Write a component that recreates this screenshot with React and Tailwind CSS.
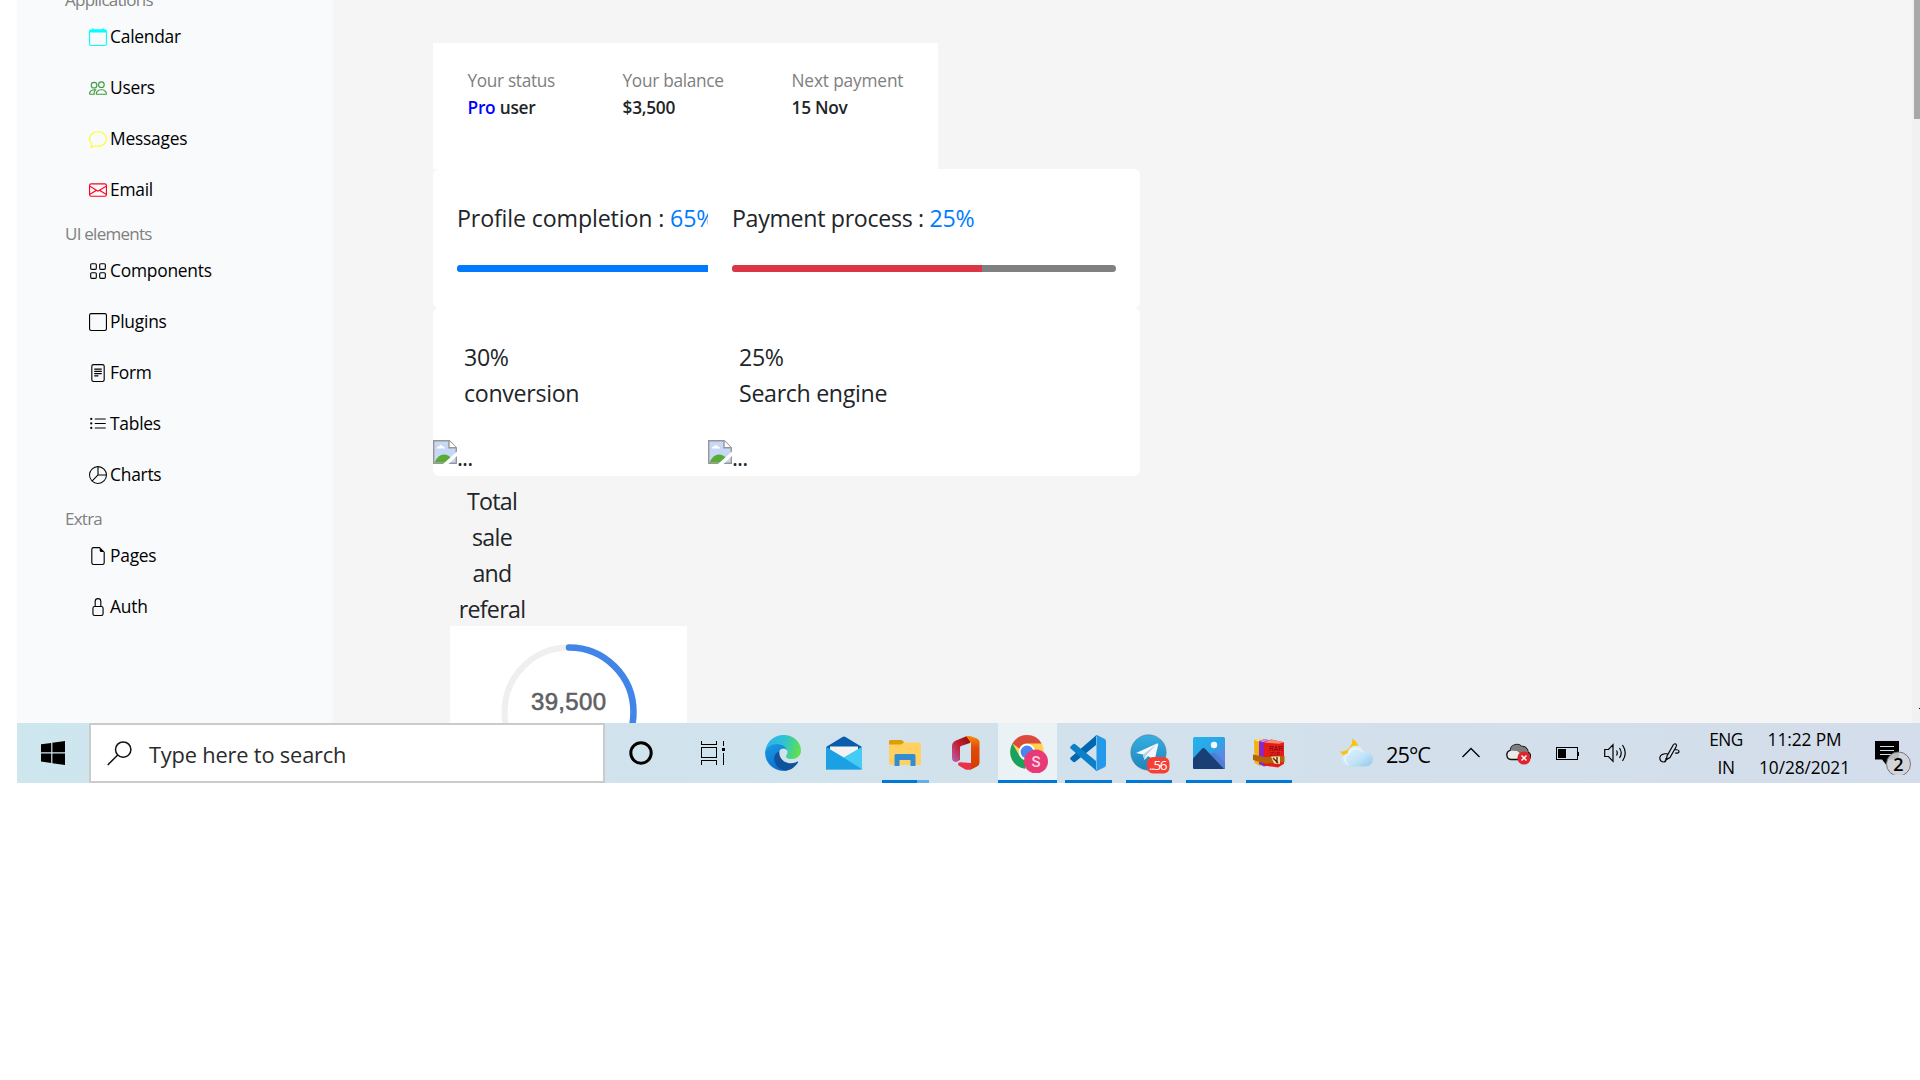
import React from "react";
import {
  BsCalendar, BsPeople, BsChat, BsEnvelope, BsGrid, BsSquare,
  BsFileText, BsListUl, BsPieChart, BsFileEarmark, BsLock,
} from "react-icons/bs";

const NAV = [
  {
    title: "Applications",
    items: [
      [BsCalendar, "Calendar", "text-[#00ffff]"],
      [BsPeople, "Users", "text-[#3d9a3d]"],
      [BsChat, "Messages", "text-[#ffff1a]"],
      [BsEnvelope, "Email", "text-[#ff0018]"],
    ],
  },
  {
    title: "UI elements",
    items: [
      [BsGrid, "Components", "text-black"],
      [BsSquare, "Plugins", "text-black"],
      [BsFileText, "Form", "text-black"],
      [BsListUl, "Tables", "text-black"],
      [BsPieChart, "Charts", "text-black"],
    ],
  },
  {
    title: "Extra",
    items: [
      [BsFileEarmark, "Pages", "text-black"],
      [BsLock, "Auth", "text-black"],
    ],
  },
];

function Sidebar() {
  return (
    <aside className="w-[316px] shrink-0 overflow-hidden bg-[#f8fafc]">
      <div className="-mt-[19px] text-[17.4px] tracking-[-0.014em]">
        {NAV.map((g) => (
          <section key={g.title}>
            <h6 className="flex h-[30px] items-end pl-12 text-[17px] leading-[23px] tracking-[-0.044em] text-[#808080]">{g.title}</h6>
            {g.items.map(([Icon, label, color]) => (
              <div key={label} className="flex h-[51px] items-center gap-[3px] pl-[72px]">
                <Icon className={"size-[18px] " + color} />
                <span className="text-black">{label}</span>
              </div>
            ))}
          </section>
        ))}
      </div>
    </aside>
  );
}

function BrokenImage() {
  return (
    <div className="flex h-9 items-start">
      <svg width="24" height="24" viewBox="0 0 24 24">
        <path d="M.7.7h15.600l7 7v15.600H.7z" fill="#c6d8f6" stroke="#979797" strokeWidth="1.400" />
        <path d="M16 .7v7h7.300" fill="#fff" stroke="#979797" strokeWidth="1.400" />
        <path d="M3.500 8.500q.5-2.500 2.500-2 1.500-3 4 0 2 .2 2 2z" fill="#fff" />
        <path d="M1.500 22.600q3.500-8 9.500-8 4.500 0 7 3.500l-5 4.500z" fill="#5aaa37" />
        <path d="M24 11.500v4.500l-8.500 8H10z" fill="#fff" />
      </svg>
      <span className="text-[23px] leading-[35px] tracking-[-0.04em]">...</span>
    </div>
  );
}

function Progress({ title, value, spacing, fill }) {
  return (
    <div className="w-[432px] shrink-0 pt-[31px] pl-6">
      <p className={"whitespace-nowrap text-[23.2px] leading-[37px] " + spacing}>
        {title} : <span className="text-[#007bff]">{value}</span>
      </p>
      <div className="mt-[28px] flex h-[7px] w-[384px] overflow-hidden rounded-full bg-[#808080]">
        <div className={"h-full " + fill} />
      </div>
    </div>
  );
}

function Stat({ value, label }) {
  return (
    <div>
      <div className="h-[132px] pt-[31px] pl-[31px] text-[23.2px] leading-[36px] tracking-[-0.014em]">
        <p>{value}</p>
        <p>{label}</p>
      </div>
      <BrokenImage />
    </div>
  );
}

function Status({ label, spacing, children }) {
  return (
    <div>
      <p className={"font-normal text-[#808080] " + spacing}>{label}</p>
      <p className="font-semibold tracking-[-0.014em]">{children}</p>
    </div>
  );
}

function Dashboard() {
  return (
    <main className="flex-1 overflow-hidden pt-[43px] pl-[100px] text-[#212529]">
      <section className="flex h-[126px] w-[505px] bg-white pt-[24px] pl-[34.5px] text-[17.3px] leading-[27px]">
        <div className="w-[155px]"><Status label="Your status" spacing="tracking-[-0.02em]"><span className="text-[#0000ff]">Pro</span> user</Status></div>
        <div className="w-[169px]"><Status label="Your balance" spacing="tracking-[-0.018em]">$3,500</Status></div>
        <div className="whitespace-nowrap"><Status label="Next payment" spacing="tracking-[-0.009em]">15 Nov</Status></div>
      </section>
      <section className="flex h-[139px] w-[707px] overflow-hidden rounded-md bg-white">
        <div className="w-[275px] overflow-hidden">
          <Progress title="Profile completion" value="65%" spacing="tracking-[-0.006em]" fill="w-[251px] bg-[#007bff]" />
        </div>
        <Progress title="Payment process" value="25%" spacing="tracking-[-0.014em]" fill="w-[250px] bg-[#dc3545]" />
      </section>
      <section className="grid h-[168px] w-[707px] grid-cols-[275px_432px] rounded-md bg-white">
        <Stat value="30%" label="conversion" />
        <Stat value="25%" label="Search engine" />
      </section>
      <section className="pl-[17px]">
        <div className="h-[150px] w-[84px] pt-[7px] text-center text-[23.2px] leading-[36px] tracking-[-0.03em]">
          <p>Total</p><p>sale</p><p>and</p><p>referal</p>
        </div>
        <div className="h-[140px] w-[237px] bg-white">
          <svg width="237" height="140" viewBox="0 0 237 140" fill="none">
            <circle cx="119" cy="86" r="64.500" stroke="#efefef" strokeWidth="6" />
            <path d="M119 21.500a64.500 64.500 0 0 1 0 129" stroke="#4285e8" strokeWidth="6.500" strokeLinecap="round" />
            <text x="81" y="83.500" textLength="75" fontSize="24" fontFamily="Liberation Sans, sans-serif" fill="#5f6164" stroke="#5f6164" strokeWidth=".6">39,500</text>
          </svg>
        </div>
      </section>
    </main>
  );
}

const EdgeIcon = () => (
  <svg width="36" height="36" viewBox="0 0 36 36">
    <defs>
      <linearGradient id="eg1" x1="0" y1="0.300" x2="1" y2="0.500"><stop stopColor="#2fb0ee" /><stop offset=".5" stopColor="#2cc3d2" /><stop offset="1" stopColor="#62e04c" /></linearGradient>
      <linearGradient id="eg2" x1="0" y1="0" x2="0.400" y2="1"><stop stopColor="#1b9de2" /><stop offset="1" stopColor="#0a6fd4" /></linearGradient>
    </defs>
    <path d="M0 17C1 7 9 0 18.500 0 29 0 36 7.500 36 15.500c0 5.500-4.300 8.500-9 8.500-4 0-6-1.300-6-2.600 0-1 1.500-1.600 1.500-4.400 0-4-4-7.500-9.500-7.500C6 9.500 1.500 13 0 17z" fill="url(#eg1)" />
    <path d="M0 17C1.500 12 6.500 9 12 9c6 0 10.500 3.600 10.500 8 0-2-2-3.500-4.200-3.500-3 0-5.300 3.500-5.300 8C13 29 18 35 23 35.200 13 38 0 31 0 17z" fill="url(#eg2)" />
    <path d="M14.500 16C10 18 8.500 22 9.500 26c1.500 6 7 10 12.500 9.500 4.500-.8 8.500-4 11-8 .4-.9-.3-1.200-1-.8C22 31.500 13 24.500 14.500 16z" fill="#10529c" />
  </svg>
);

const MailIcon = () => (
  <svg width="36" height="36" viewBox="0 0 36 36">
    <path d="M0 12 16.500 2q1.500-1 3 0L36 12l-18 12z" fill="#0b5cad" />
    <path d="M4 11.500h28V24H4z" fill="#f3f3f3" />
    <path d="M0 12l18 10.500L36 12v22.500H0z" fill="#2fb5ec" />
    <path d="M18 22.500 36 12v22z" fill="#45ccf5" />
    <path d="M0 12l36 22.500H0z" fill="#159be0" opacity=".75" />
  </svg>
);

const FolderIcon = () => (
  <svg width="32" height="36" viewBox="0 0 32 36">
    <path d="M0 6.500Q0 5 1.500 5h11l2.500 2v4H0z" fill="#dd9d05" />
    <path d="M0 9.500h12L15 7.500h15.500Q32 7.500 32 9v19.500q0 1.500-1.500 1.500h-29Q0 30 0 28.500z" fill="#fed161" />
    <path d="M5.500 31V20.500Q5.500 19 7 19h18q1.500 0 1.500 1.500V31h-5v-6h-11v6z" fill="#338dd3" />
  </svg>
);

const OfficeIcon = () => (
  <svg width="28" height="36" viewBox="0 0 28 36">
    <defs>
      <linearGradient id="of1" x1="1" y1="0" x2="0" y2="1"><stop stopColor="#8f0b0b" /><stop offset=".5" stopColor="#c22033" /><stop offset="1" stopColor="#ba63b7" /></linearGradient>
      <linearGradient id="of2" x1="0" y1="0" x2="0" y2="1"><stop stopColor="#f78b0b" /><stop offset=".35" stopColor="#e04b08" /><stop offset="1" stopColor="#d63b02" /></linearGradient>
    </defs>
    <path d="M15 1 4 5.500Q0 7 0 11v12q0 4 4.500 4L8 25V12.500q0-1 1-1.500l9-3V1z" fill="url(#of1)" />
    <path d="M14 1h4l7 2.500Q27.500 4.500 27.500 7v21q0 2.500-2.500 3.500L18 35h-1l2-3V8z" fill="url(#of2)" />
    <path d="M6 29q0-1.500 2-1.700l11 .7v4q-1 4-6 2.300L7.500 31Q6 30.300 6 29z" fill="#ec2f4b" />
  </svg>
);

const ChromeIcon = () => (
  <svg width="40" height="40" viewBox="0 0 40 40">
    <circle cx="19" cy="19" r="16.800" fill="#fdd24e" />
    <path d="M4.400 10.600A16.800 16.800 0 0 1 33.600 10.600H19a8.400 8.400 0 0 0-7.600 5z" fill="#da4a3d" />
    <path d="M4.400 10.600l7.300 12.600A8.400 8.400 0 0 0 19 27.400l-2 8.300A16.800 16.800 0 0 1 4.400 10.600z" fill="#19a15f" />
    <circle cx="19" cy="19" r="8.200" fill="#fff" />
    <circle cx="19" cy="19" r="6.400" fill="#4a86f0" />
    <circle cx="28" cy="28.500" r="12" fill="#e93a78" />
    <text x="28" y="34" textAnchor="middle" fontSize="15" fontFamily="Roboto, sans-serif" fontWeight="500" fill="#fbd5e2">S</text>
  </svg>
);

const CodeIcon = () => (
  <svg width="36" height="36" viewBox="0 0 36 36">
    <path d="M26 .5v9.500L5 27q-1 .6-2-.2L.6 24.600q-.9-1 0-2z" fill="#0067b0" />
    <path d="M26 35.500V26L5 9Q4 8.400 3 9.200L.6 11.400q-.9 1 0 2z" fill="#0a80c8" />
    <path d="M25.500.3q.8-.5 1.800 0L34.500 3.800q1.500.8 1.500 2.500v23.400q0 1.700-1.500 2.500l-7.200 3.500q-1 .5-2 0 1.200-.2 1.200-2V2.300q0-1.600-1-2z" fill="#2499ea" />
  </svg>
);

const TelegramIcon = () => (
  <svg width="42" height="42" viewBox="0 0 42 42">
    <defs><linearGradient id="tg" x1="0" y1="0" x2="0" y2="1"><stop stopColor="#37aee2" /><stop offset="1" stopColor="#1c86bb" /></linearGradient></defs>
    <circle cx="20.500" cy="20.500" r="17.700" fill="url(#tg)" stroke="#567f96" strokeWidth=".6" />
    <path d="M8 21 29 11.500q1.500-.5 1.200 1L26.500 28.500 20 23.900 16.500 28 15 22.500z" fill="#f4f9fc" />
    <path d="M15 22.500 28.500 12.500 18 23.500 16.500 28z" fill="#b9d3e3" />
    <rect x="19" y="25" width="22.500" height="16.500" rx="6" fill="#f73f34" />
    <text x="21" y="38" textLength="18.500" fontSize="13.500" fontFamily="Open Sans, sans-serif" fill="#fff">..56</text>
  </svg>
);

const PhotosIcon = () => (
  <svg width="32" height="32" viewBox="0 0 32 32">
    <defs><linearGradient id="ph" x1="0" y1="0" x2="1" y2="1"><stop stopColor="#26b2ee" /><stop offset=".5" stopColor="#2ba5e5" /><stop offset="1" stopColor="#8d6be0" /></linearGradient></defs>
    <rect width="32" height="32" rx="1.500" fill="url(#ph)" />
    <path d="M18 17.500q2-3.500 4-1.500L32 25.500V32H14z" fill="#4f7fd4" />
    <path d="M0 21.500 9 11.800q1.500-1.500 3 0L31 32H1.500Q0 32 0 30.500z" fill="#1a3e76" />
    <circle cx="21" cy="8" r="3.200" fill="#f3f8fb" />
  </svg>
);

const RarIcon = () => (
  <svg width="32" height="30" viewBox="0 0 32 30">
    <path d="M1 2l6-1.500 4 1v24L7 28l-5.500-3z" fill="#f0b40c" />
    <path d="M1 2l6-1.500 4 1-6 2z" fill="#fbe27b" />
    <path d="M6 3l6-2 5 1.500v24L11 28.500 6 26z" fill="#8b28c7" />
    <path d="M6 3l6-2 4 1.200-6 2z" fill="#c98be8" />
    <path d="M11 4.500 18 1.500l13 2.700v21.500L25 29.500l-14-2z" fill="#e51d1a" />
    <path d="M11 4.500 18 1.500l13 2.700-5 1.500z" fill="#f58c72" />
    <text x="16" y="12.500" fontSize="6.500" textLength="14" fontFamily="Liberation Sans, sans-serif" fill="#6d0707">RAR</text>
    <text x="17" y="18" fontSize="5.500" textLength="10" fontFamily="Liberation Sans, sans-serif" fill="#8d0d0d">ZIP</text>
    <path d="M0 16.500 12 19l19.500-1v6L12 25.500 0 22z" fill="#b5620c" />
    <path d="M18 18.500h9v7.500l-6-.5z" fill="#f4dfa9" />
    <path d="M20 20l5 5M24 19v6" stroke="#46250b" strokeWidth="1.300" />
  </svg>
);

const WeatherIcon = () => (
  <svg width="34" height="30" viewBox="0 0 34 30">
    <defs><linearGradient id="cl" x1="0" y1="0" x2="1" y2="1"><stop stopColor="#e9f6fd" /><stop offset=".6" stopColor="#c2e3f6" /><stop offset="1" stopColor="#8ec8ec" /></linearGradient></defs>
    <path d="M12 .5q6 3 6 9T11 19q-7 1-11-5.500 6 .5 9.500-4t2.500-9z" fill="#fcc20c" />
    <path d="M9 28.500a6.500 6.500 0 0 1-1.500-13 8.500 8.500 0 0 1 16.500-2q8.500.5 9 7.500-.5 7-8 7.500z" fill="url(#cl)" />
    <path d="M9 27a5.500 5.500 0 0 1-.5-10.500A8 8 0 0 1 23 14.500" stroke="#fff" strokeWidth="1" fill="none" opacity=".8" />
  </svg>
);

function TaskButton({ w, ml, active, split, children }) {
  return (
    <div className={"flex h-[60px] flex-col " + w + " " + ml + (active ? " bg-[#eaf2f6]" : "")}>
      <div className="flex h-[57px] items-center justify-center pt-[3px]">{children}</div>
      <div className="flex h-[3px]">
        <div className="flex-1 bg-[#0078d7]" />
        {split && <div className="w-3 bg-[#66aee6]" />}
      </div>
    </div>
  );
}

function Taskbar() {
  return (
    <footer className="ml-[17px] flex h-[60px] items-center overflow-hidden bg-gradient-to-r from-[#cee6ee] via-[#d2e1eb] via-60% to-[#d4ddeb] text-black">
      <div className="flex w-[72px] shrink-0 justify-center">
        <svg width="24" height="24" viewBox="0 0 24 24"><path d="M0 3.300 10.200 2v9.300H0zM11.400 1.700 24 0v11.300H11.400zM0 12.500h10.200V22L0 20.600zM11.400 12.500H24V24l-12.600-1.700z" /></svg>
      </div>
      <div className="flex h-[60px] w-[516px] shrink-0 items-center border-2 border-[#cbcbcb] bg-white pl-4 text-[#2b2b2b]">
        <svg width="25" height="25" viewBox="0 0 25 25" fill="none" stroke="#111" strokeWidth="1.500"><circle cx="16.200" cy="8.600" r="7.700" /><path d="M10.700 14 .7 24" /></svg>
        <span className="pt-[5px] pl-[17px] text-[21.800px] tracking-[-0.008em]">Type here to search</span>
      </div>
      <svg className="ml-6 shrink-0" width="24" height="24" viewBox="0 0 24 24"><circle cx="12" cy="12" r="10.200" fill="none" stroke="#000" strokeWidth="3" /></svg>
      <svg className="ml-[48px] shrink-0" width="24" height="24" viewBox="0 0 24 24" fill="none" stroke="#000" strokeWidth="1" shapeRendering="crispEdges">
        <path d="M.5 0v3.500h15V0M.5 23.500v-4h15v4M.5 6.500h15v10H.5zM22.500 0v5M22.500 11.500v12" /><path d="M21 7h3v3h-3z" fill="#000" stroke="none" />
      </svg>
      <div className="ml-[40px] shrink-0"><EdgeIcon /></div>
      <div className="ml-[25px] shrink-0"><MailIcon /></div>
      <TaskButton w="w-[47px] shrink-0" ml="ml-[20px]" split><div className="mr-px"><FolderIcon /></div></TaskButton>
      <div className="ml-[22.500px] mr-[0.500px] shrink-0"><OfficeIcon /></div>
      <TaskButton w="w-[59px] shrink-0" ml="ml-[18px]" active><ChromeIcon /></TaskButton>
      <TaskButton w="w-[47px] shrink-0" ml="ml-[8px]"><div className="mr-px"><CodeIcon /></div></TaskButton>
      <TaskButton w="w-[46px] shrink-0" ml="ml-[14px]"><TelegramIcon /></TaskButton>
      <TaskButton w="w-[46px] shrink-0" ml="ml-[14px]"><PhotosIcon /></TaskButton>
      <TaskButton w="w-[46px] shrink-0" ml="ml-[14px]"><RarIcon /></TaskButton>
      <div className="ml-[48px] shrink-0"><WeatherIcon /></div>
      <span className="ml-[12px] w-[76px] shrink-0 pt-[5px] text-[21.800px] tracking-[-0.045em]">25°C</span>
      <svg className="shrink-0" width="18" height="12" viewBox="0 0 18 12" fill="none" stroke="#000" strokeWidth="1.300"><path d="M.5 10 9 1.500 17.500 10" /></svg>
      <svg className="ml-[26px] shrink-0" width="25" height="24" viewBox="0 0 25 24">
        <path d="M5 18.500a4.700 4.700 0 0 1-.7-9.200A6.500 6.500 0 0 1 15.500 5.500 6 6 0 0 1 22 11.500a3.700 3.700 0 0 1 0 7z" fill="#ececec" stroke="#111" strokeWidth="1.400" />
        <path d="M4.300 9.500A6.500 6.500 0 0 1 15.500 5.600 6 6 0 0 1 22 11.500l-5 3L11 10z" fill="#7d7d7d" />
        <circle cx="18" cy="17" r="6.600" fill="#e0242b" /><path d="M15.500 14.500l5 5M20.500 14.500l-5 5" stroke="#fff" strokeWidth="1.500" />
      </svg>
      <svg className="ml-[25px] mt-px shrink-0" width="24" height="14" viewBox="0 0 24 14" shapeRendering="crispEdges"><path d="M.5.5h20.500v12H.5z" fill="none" stroke="#000" /><path d="M2 2h8v9H2zM21.500 4.500H23v4h-1.500z" /></svg>
      <svg className="ml-[24px] shrink-0" width="23" height="20" viewBox="0 0 23 20" fill="none" stroke="#000" strokeWidth="1.200">
        <path d="M.7 6.500h3.800L9 1.700v16.600L4.500 13.500H.7zM12.500 7.500q1.500 2.500 0 5M15.500 5q3.500 5 0 10M18.500 2q5.500 8 0 16" />
      </svg>
      <svg className="ml-[32px] shrink-0" width="21" height="22" viewBox="0 0 21 22" fill="none" stroke="#000" strokeWidth="1.200">
        <path d="M7.500 17.500 8 14 14.200 3q1.300-1.800 2.600-1t.3 2.800L11 15.500zM9 11.500Q1.500 11.500.8 15.500q0 4.500 4.200 4.500 2.500-.5 2-4M15.500 7.500q4.500 0 4.500 2t-4 1.500" />
      </svg>
      <div className="ml-[23px] w-[46px] shrink-0 pt-[2px] text-center text-[17.300px] leading-[28px] tracking-[-0.03em]"><p>ENG</p><p>IN</p></div>
      <div className="ml-[4px] w-[103px] shrink-0 pt-[2px] text-center text-[17.300px] leading-[28px] tracking-[-0.005em]"><p>11:22 PM</p><p>10/28/2021</p></div>
      <svg className="ml-[19px] mt-[4px] shrink-0" width="37" height="40" viewBox="0 0 37 40">
        <path d="M0 6h24v18.500H13.500l-2.500 5-4-5H0z" />
        <path d="M5 11.500h14M5 15.500h14M5 19.500h14" stroke="#d4ddeb" strokeWidth="1" />
        <circle cx="23.500" cy="29" r="12" fill="#d2d3d6" fillOpacity=".88" stroke="#777" strokeWidth="1" />
        <text x="23.500" y="35.500" textAnchor="middle" fontSize="18" fontFamily="Open Sans, sans-serif" fontWeight="600">2</text>
      </svg>
    </footer>
  );
}

export default function App() {
  return (
    <div className="h-[1080px] w-[1920px] overflow-hidden bg-white font-['Open_Sans','Noto_Sans',sans-serif]">
      <div className="ml-[17px] flex h-[723px] overflow-hidden bg-[#f5f5f5]">
        <Sidebar />
        <Dashboard />
        <div className="w-2 shrink-0 bg-[#f1f1f1]">
          <div className="ml-[2px] h-[119px] bg-[#a8a8a8]" />
          <div className="mt-[589px] ml-[7px] h-px w-px bg-black" />
        </div>
      </div>
      <Taskbar />
    </div>
  );
}
